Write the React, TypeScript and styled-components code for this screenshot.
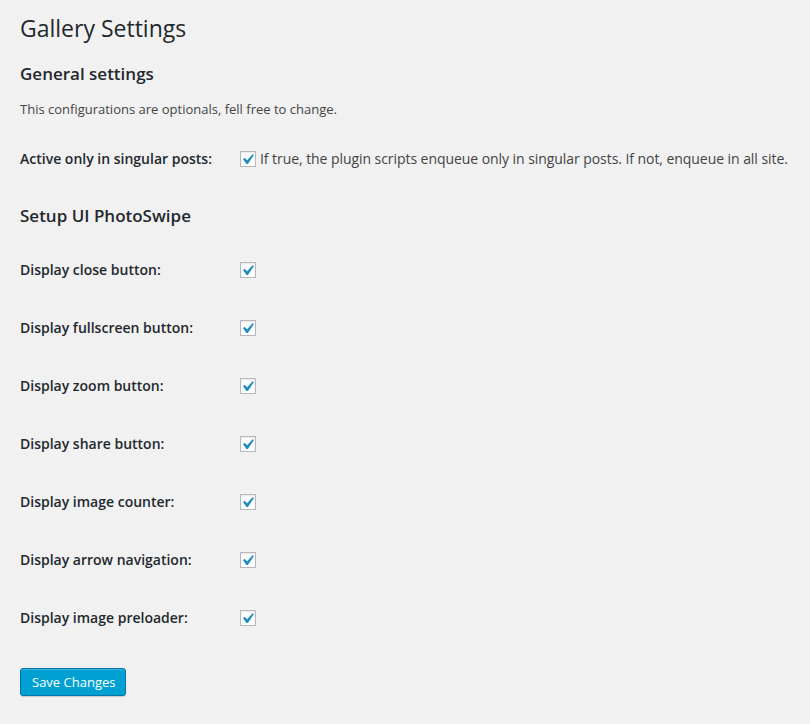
import React from "react";
import styled, { createGlobalStyle } from "styled-components";

const Global = createGlobalStyle`
  html, body { margin: 0; padding: 0; background: #f1f1f1; }
  body {
    font-family: "Open Sans", "Noto Sans", sans-serif;
    font-size: 13px;
    line-height: 1.4em;
    color: #444;
  }
`;

const Wrap = styled.div`
  padding: 0 20px 20px 20px;
`;

const Title = styled.h1`
  margin: 0;
  padding: 14px 0 0 0;
  font-size: 23px;
  font-weight: 400;
  line-height: 29px;
  color: #23282d;
`;

const SectionTitle = styled.h2<{ $top: number; $bottom: number }>`
  margin: ${(p) => p.$top}px 0 ${(p) => p.$bottom}px 0;
  font-size: 17px;
  font-weight: 600;
  line-height: 23px;
  color: #23282d;
`;

const Description = styled.p`
  margin: 15px 0 0 0;
  font-size: 13px;
  line-height: 19px;
  color: #444;
`;

const Rows = styled.div<{ $top: number }>`
  display: flex;
  flex-direction: column;
  margin-top: ${(p) => p.$top}px;
`;

const Row = styled.div`
  display: grid;
  grid-template-columns: 220px 1fr;
  align-items: center;
  height: 58px;
`;

const Label = styled.label`
  font-size: 14px;
  font-weight: 600;
  line-height: 18px;
  color: #23282d;
`;

const Control = styled.div`
  display: flex;
  align-items: center;
  gap: 4px;
  font-size: 14px;
  line-height: 18px;
  color: #444;
  white-space: nowrap;
`;

const Hint = styled.span`
  letter-spacing: -0.06px;
`;

const Box = styled.span`
  position: relative;
  display: inline-block;
  box-sizing: border-box;
  width: 16px;
  height: 16px;
  flex: none;
  background: #fff;
  border: 1px solid #b4b9be;
  box-shadow: inset 0 1px 2px rgba(0, 0, 0, 0.1);
`;

const Check = styled.svg`
  position: absolute;
  left: -4px;
  top: -3px;
  width: 21px;
  height: 21px;
`;

const Button = styled.button`
  margin-top: 21px;
  height: 28px;
  padding: 0 10px 1px 11px;
  font-family: "Open Sans", "Noto Sans", sans-serif;
  font-size: 13px;
  line-height: 26px;
  color: #fff;
  background: #00a0d2;
  border: 1px solid #0073aa;
  border-radius: 3px;
  box-shadow: inset 0 1px 0 rgba(120, 200, 230, 0.5), 0 1px 0 rgba(0, 0, 0, 0.15);
  cursor: pointer;
`;

const Checkbox = () => (
  <Box>
    <Check viewBox="0 0 20 20">
      <path
        fill="#1e8cbe"
        d="M14.83 4.89l1.34.94-5.81 8.38H9.02L5.78 9.67l1.34-1.25 2.57 2.4z"
      />
    </Check>
  </Box>
);

const options = [
  "Display close button:",
  "Display fullscreen button:",
  "Display zoom button:",
  "Display share button:",
  "Display image counter:",
  "Display arrow navigation:",
  "Display image preloader:",
];

export default function App() {
  return (
    <Wrap>
      <Global />
      <Title>Gallery Settings</Title>
      <SectionTitle $top={19} $bottom={0}>General settings</SectionTitle>
      <Description>This configurations are optionals, fell free to change.</Description>
      <Rows $top={11}>
        <Row>
          <Label>Active only in singular posts:</Label>
          <Control>
            <Checkbox />
            <Hint>If true, the plugin scripts enqueue only in singular posts. If not, enqueue in all site.</Hint>
          </Control>
        </Row>
      </Rows>
      <SectionTitle $top={16} $bottom={14}>Setup UI PhotoSwipe</SectionTitle>
      <Rows $top={0}>
        {options.map((o) => (
          <Row key={o}>
            <Label>{o}</Label>
            <Control>
              <Checkbox />
            </Control>
          </Row>
        ))}
      </Rows>
      <Button>Save Changes</Button>
    </Wrap>
  );
}
